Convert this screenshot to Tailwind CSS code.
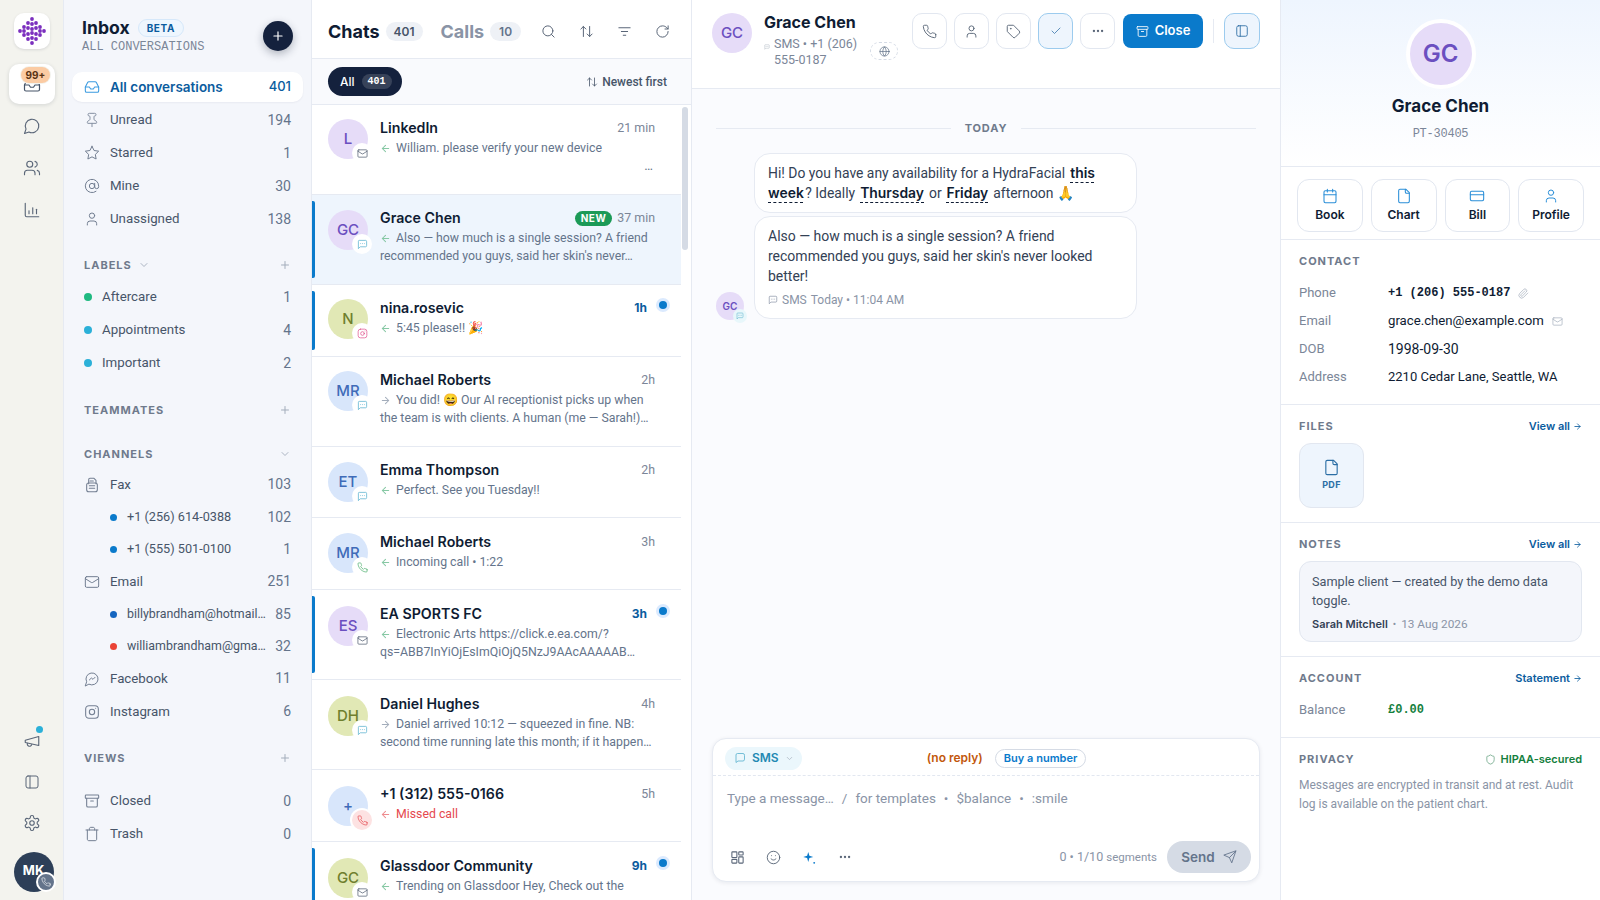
<!DOCTYPE html>
<html lang="en">
<head>
    <meta charset="UTF-8">
    <title>Inbox</title>
    <script src="https://cdn.jsdelivr.net/npm/@tailwindcss/browser@4"></script>
</head>
<body class="h-[900px] w-[1600px] overflow-hidden bg-white font-['Roboto',sans-serif] text-[#0f1c33]">
    <!-- Icon sprite -->
    <svg class="hidden">
        <symbol id="i-inbox" viewBox="0 0 24 24" fill="none" stroke="currentColor" stroke-width="1.6" stroke-linecap="round" stroke-linejoin="round"><polyline points="22 12 16 12 14 15 10 15 8 12 2 12"/><path d="M5.45 5.11 2 12v6a2 2 0 0 0 2 2h16a2 2 0 0 0 2-2v-6l-3.45-6.89A2 2 0 0 0 16.76 4H7.24a2 2 0 0 0-1.79 1.11z"/></symbol>
        <symbol id="i-pin" viewBox="0 0 24 24" fill="none" stroke="currentColor" stroke-width="1.5" stroke-linecap="round" stroke-linejoin="round"><path d="M12 17v5"/><path d="M9 10.76a2 2 0 0 1-1.11 1.79l-1.78.9A2 2 0 0 0 5 15.24V16a1 1 0 0 0 1 1h12a1 1 0 0 0 1-1v-.76a2 2 0 0 0-1.11-1.79l-1.78-.9A2 2 0 0 1 15 10.76V7a1 1 0 0 1 1-1 2 2 0 0 0 0-4H8a2 2 0 0 0 0 4 1 1 0 0 1 1 1z"/></symbol>
        <symbol id="i-star" viewBox="0 0 24 24" fill="none" stroke="currentColor" stroke-width="1.5" stroke-linecap="round" stroke-linejoin="round"><polygon points="12 2 15.09 8.26 22 9.27 17 14.14 18.18 21.02 12 17.77 5.82 21.02 7 14.14 2 9.27 8.91 8.26 12 2"/></symbol>
        <symbol id="i-at" viewBox="0 0 24 24" fill="none" stroke="currentColor" stroke-width="1.5" stroke-linecap="round" stroke-linejoin="round"><circle cx="12" cy="12" r="4"/><path d="M16 8v5a3 3 0 0 0 6 0v-1a10 10 0 1 0-4 8"/></symbol>
        <symbol id="i-user" viewBox="0 0 24 24" fill="none" stroke="currentColor" stroke-width="1.5" stroke-linecap="round" stroke-linejoin="round"><path d="M19 21v-2a4 4 0 0 0-4-4H9a4 4 0 0 0-4 4v2"/><circle cx="12" cy="7" r="4"/></symbol>
        <symbol id="i-chat" viewBox="0 0 24 24" fill="none" stroke="currentColor" stroke-width="1.5" stroke-linecap="round" stroke-linejoin="round"><path d="M7.9 20A9 9 0 1 0 4 16.1L2 22Z"/></symbol>
        <symbol id="i-msg" viewBox="0 0 24 24" fill="none" stroke="currentColor" stroke-width="1.7" stroke-linecap="round" stroke-linejoin="round"><path d="M21 15a3 3 0 0 1-3 3H8l-4 3V6a3 3 0 0 1 3-3h11a3 3 0 0 1 3 3z"/></symbol>
        <symbol id="i-users" viewBox="0 0 24 24" fill="none" stroke="currentColor" stroke-width="1.5" stroke-linecap="round" stroke-linejoin="round"><path d="M16 21v-2a4 4 0 0 0-4-4H6a4 4 0 0 0-4 4v2"/><circle cx="9" cy="7" r="4"/><path d="M22 21v-2a4 4 0 0 0-3-3.87"/><path d="M16 3.13a4 4 0 0 1 0 7.75"/></symbol>
        <symbol id="i-chart" viewBox="0 0 24 24" fill="none" stroke="currentColor" stroke-width="1.5" stroke-linecap="round" stroke-linejoin="round"><path d="M3 3v16a2 2 0 0 0 2 2h16"/><path d="M8 17v-4"/><path d="M13 17V9"/><path d="M18 17v-6"/></symbol>
        <symbol id="i-mega" viewBox="0 0 24 24" fill="none" stroke="currentColor" stroke-width="1.5" stroke-linecap="round" stroke-linejoin="round"><path d="m3 11 18-5v12L3 14v-3z"/><path d="M11.6 16.8a3 3 0 1 1-5.8-1.6"/></symbol>
        <symbol id="i-panel" viewBox="0 0 24 24" fill="none" stroke="currentColor" stroke-width="1.5" stroke-linecap="round" stroke-linejoin="round"><rect x="3" y="3" width="18" height="18" rx="3"/><path d="M9 3v18"/></symbol>
        <symbol id="i-gear" viewBox="0 0 24 24" fill="none" stroke="currentColor" stroke-width="1.5" stroke-linecap="round" stroke-linejoin="round"><path d="M12.22 2h-.44a2 2 0 0 0-2 2v.18a2 2 0 0 1-1 1.73l-.43.25a2 2 0 0 1-2 0l-.15-.08a2 2 0 0 0-2.73.73l-.22.38a2 2 0 0 0 .73 2.73l.15.1a2 2 0 0 1 1 1.72v.51a2 2 0 0 1-1 1.74l-.15.09a2 2 0 0 0-.73 2.73l.22.38a2 2 0 0 0 2.73.73l.15-.08a2 2 0 0 1 2 0l.43.25a2 2 0 0 1 1 1.73V20a2 2 0 0 0 2 2h.44a2 2 0 0 0 2-2v-.18a2 2 0 0 1 1-1.73l.43-.25a2 2 0 0 1 2 0l.15.08a2 2 0 0 0 2.73-.73l.22-.39a2 2 0 0 0-.73-2.73l-.15-.08a2 2 0 0 1-1-1.74v-.5a2 2 0 0 1 1-1.74l.15-.09a2 2 0 0 0 .73-2.73l-.22-.38a2 2 0 0 0-2.73-.73l-.15.08a2 2 0 0 1-2 0l-.43-.25a2 2 0 0 1-1-1.73V4a2 2 0 0 0-2-2z"/><circle cx="12" cy="12" r="3"/></symbol>
        <symbol id="i-fax" viewBox="0 0 24 24" fill="none" stroke="currentColor" stroke-width="1.6" stroke-linecap="round" stroke-linejoin="round"><path d="M7 10V4a2 2 0 0 1 2-2h6l3 3v5"/><rect x="4" y="9" width="16" height="13" rx="3"/><path d="M8 13h8M8 17h8M9 6h5"/></symbol>
        <symbol id="i-mail" viewBox="0 0 24 24" fill="none" stroke="currentColor" stroke-width="1.5" stroke-linecap="round" stroke-linejoin="round"><rect x="2" y="4" width="20" height="16" rx="2"/><path d="m22 7-8.97 5.7a1.94 1.94 0 0 1-2.06 0L2 7"/></symbol>
        <symbol id="i-fb" viewBox="0 0 24 24" fill="none" stroke="currentColor" stroke-width="1.5" stroke-linecap="round" stroke-linejoin="round"><path d="M7.9 20A9 9 0 1 0 4 16.1L2 22Z"/><path d="m8 13.5 3-3 2.5 2 3-3"/></symbol>
        <symbol id="i-ig" viewBox="0 0 24 24" fill="none" stroke="currentColor" stroke-width="1.6" stroke-linecap="round" stroke-linejoin="round"><rect x="2.5" y="2.5" width="19" height="19" rx="5"/><circle cx="12" cy="12" r="4"/><path d="M17.5 6.5h.01"/></symbol>
        <symbol id="i-archive" viewBox="0 0 24 24" fill="none" stroke="currentColor" stroke-width="1.6" stroke-linecap="round" stroke-linejoin="round"><rect x="2" y="3" width="20" height="5" rx="1"/><path d="M4 8v11a2 2 0 0 0 2 2h12a2 2 0 0 0 2-2V8"/><path d="M10 12h4"/></symbol>
        <symbol id="i-trash" viewBox="0 0 24 24" fill="none" stroke="currentColor" stroke-width="1.5" stroke-linecap="round" stroke-linejoin="round"><path d="M3 6h18"/><path d="M19 6v14c0 1-1 2-2 2H7c-1 0-2-1-2-2V6"/><path d="M8 6V4c0-1 1-2 2-2h4c1 0 2 1 2 2v2"/></symbol>
        <symbol id="i-plus" viewBox="0 0 24 24" fill="none" stroke="currentColor" stroke-width="2" stroke-linecap="round"><path d="M12 5v14M5 12h14"/></symbol>
        <symbol id="i-down" viewBox="0 0 24 24" fill="none" stroke="currentColor" stroke-width="1.8" stroke-linecap="round" stroke-linejoin="round"><path d="m6 9 6 6 6-6"/></symbol>
        <symbol id="i-search" viewBox="0 0 24 24" fill="none" stroke="currentColor" stroke-width="1.6" stroke-linecap="round" stroke-linejoin="round"><circle cx="11" cy="11" r="8"/><path d="m21 21-4.3-4.3"/></symbol>
        <symbol id="i-sort" viewBox="0 0 24 24" fill="none" stroke="currentColor" stroke-width="1.6" stroke-linecap="round" stroke-linejoin="round"><path d="m21 16-4 4-4-4"/><path d="M17 20V4"/><path d="m3 8 4-4 4 4"/><path d="M7 4v16"/></symbol>
        <symbol id="i-filter" viewBox="0 0 24 24" fill="none" stroke="currentColor" stroke-width="1.6" stroke-linecap="round"><path d="M3 6h18M7 12h10M10 18h4"/></symbol>
        <symbol id="i-refresh" viewBox="0 0 24 24" fill="none" stroke="currentColor" stroke-width="1.6" stroke-linecap="round" stroke-linejoin="round"><path d="M21 12a9 9 0 1 1-9-9c2.52 0 4.93 1 6.74 2.74L21 8"/><path d="M21 3v5h-5"/></symbol>
        <symbol id="i-phone" viewBox="0 0 24 24" fill="none" stroke="currentColor" stroke-width="1.5" stroke-linecap="round" stroke-linejoin="round"><path d="M22 16.92v3a2 2 0 0 1-2.18 2 19.79 19.79 0 0 1-8.63-3.07 19.5 19.5 0 0 1-6-6 19.79 19.79 0 0 1-3.07-8.67A2 2 0 0 1 4.11 2h3a2 2 0 0 1 2 1.72 12.84 12.84 0 0 0 .7 2.81 2 2 0 0 1-.45 2.11L8.09 9.91a16 16 0 0 0 6 6l1.27-1.27a2 2 0 0 1 2.11-.45 12.84 12.84 0 0 0 2.81.7A2 2 0 0 1 22 16.92z"/></symbol>
        <symbol id="i-tag" viewBox="0 0 24 24" fill="none" stroke="currentColor" stroke-width="1.5" stroke-linecap="round" stroke-linejoin="round"><path d="M12.586 2.586A2 2 0 0 0 11.172 2H4a2 2 0 0 0-2 2v7.172a2 2 0 0 0 .586 1.414l8.704 8.704a2.426 2.426 0 0 0 3.42 0l6.58-6.58a2.426 2.426 0 0 0 0-3.42z"/><circle cx="7.5" cy="7.5" r=".5"/></symbol>
        <symbol id="i-check" viewBox="0 0 24 24" fill="none" stroke="currentColor" stroke-width="1.5" stroke-linecap="round" stroke-linejoin="round"><path d="M20 6 9 17l-5-5"/></symbol>
        <symbol id="i-dots" viewBox="0 0 24 24" fill="currentColor"><circle cx="5" cy="12" r="2"/><circle cx="12" cy="12" r="2"/><circle cx="19" cy="12" r="2"/></symbol>
        <symbol id="i-globe" viewBox="0 0 24 24" fill="none" stroke="currentColor" stroke-width="1.6" stroke-linecap="round" stroke-linejoin="round"><circle cx="12" cy="12" r="10"/><path d="M12 2a14.5 14.5 0 0 0 0 20 14.5 14.5 0 0 0 0-20"/><path d="M2 12h20"/></symbol>
        <symbol id="i-file" viewBox="0 0 24 24" fill="none" stroke="currentColor" stroke-width="1.6" stroke-linecap="round" stroke-linejoin="round"><path d="M15 2H6a2 2 0 0 0-2 2v16a2 2 0 0 0 2 2h12a2 2 0 0 0 2-2V7Z"/><path d="M14 2v4a2 2 0 0 0 2 2h4"/></symbol>
        <symbol id="i-cal" viewBox="0 0 24 24" fill="none" stroke="currentColor" stroke-width="1.6" stroke-linecap="round" stroke-linejoin="round"><rect x="3" y="4" width="18" height="18" rx="2"/><path d="M16 2v4M8 2v4M3 10h18"/></symbol>
        <symbol id="i-card" viewBox="0 0 24 24" fill="none" stroke="currentColor" stroke-width="1.6" stroke-linecap="round" stroke-linejoin="round"><rect x="2" y="5" width="20" height="14" rx="2"/><path d="M2 10h20"/></symbol>
        <symbol id="i-shield" viewBox="0 0 24 24" fill="none" stroke="currentColor" stroke-width="1.6" stroke-linecap="round" stroke-linejoin="round"><path d="M20 13c0 5-3.5 7.5-7.66 8.95a1 1 0 0 1-.67-.01C7.5 20.5 4 18 4 13V6a1 1 0 0 1 1-1c2 0 4.5-1.2 6.24-2.72a1.17 1.17 0 0 1 1.52 0C14.51 3.81 17 5 19 5a1 1 0 0 1 1 1z"/></symbol>
        <symbol id="i-send" viewBox="0 0 24 24" fill="none" stroke="currentColor" stroke-width="1.5" stroke-linecap="round" stroke-linejoin="round"><path d="m22 2-7 20-4-9-9-4Z"/><path d="M22 2 11 13"/></symbol>
        <symbol id="i-smile" viewBox="0 0 24 24" fill="none" stroke="currentColor" stroke-width="1.5" stroke-linecap="round" stroke-linejoin="round"><circle cx="12" cy="12" r="10"/><path d="M8 14s1.5 2 4 2 4-2 4-2"/><path d="M9 9h.01M15 9h.01"/></symbol>
        <symbol id="i-grid" viewBox="0 0 24 24" fill="none" stroke="currentColor" stroke-width="1.7" stroke-linejoin="round"><rect x="3" y="3" width="8" height="9" rx="1"/><rect x="14" y="3" width="7" height="5" rx="1"/><rect x="14" y="11" width="7" height="10" rx="1"/><rect x="3" y="15" width="8" height="6" rx="1"/></symbol>
        <symbol id="i-clip" viewBox="0 0 24 24" fill="none" stroke="currentColor" stroke-width="1.5" stroke-linecap="round" stroke-linejoin="round"><path d="m21.44 11.05-9.19 9.19a6 6 0 0 1-8.49-8.49l8.57-8.57A4 4 0 1 1 18 8.84l-8.59 8.57a2 2 0 0 1-2.83-2.83l8.49-8.48"/></symbol>
        <symbol id="i-sms" viewBox="0 0 24 24" fill="none" stroke="currentColor" stroke-width="1.7" stroke-linecap="round" stroke-linejoin="round"><path d="M21 15a2 2 0 0 1-2 2H7l-4 4V5a2 2 0 0 1 2-2h14a2 2 0 0 1 2 2z"/><path d="M8 10h.01M12 10h.01M16 10h.01"/></symbol>
        <symbol id="i-left" viewBox="0 0 24 24" fill="none" stroke="currentColor" stroke-width="2.2" stroke-linecap="round" stroke-linejoin="round"><path d="M19 12H5M12 19l-7-7 7-7"/></symbol>
        <symbol id="i-right" viewBox="0 0 24 24" fill="none" stroke="currentColor" stroke-width="2.2" stroke-linecap="round" stroke-linejoin="round"><path d="M5 12h14M12 5l7 7-7 7"/></symbol>
        <symbol id="i-spark" viewBox="0 0 24 24" fill="currentColor"><path d="M10 3l1.8 6.2L18 11l-6.2 1.8L10 19l-1.8-6.2L2 11l6.2-1.8z"/><circle cx="19.5" cy="20.5" r="1.5"/></symbol>
    </svg>

    <div class="flex h-full">
        <!-- Rail -->
        <nav class="flex w-[64px] shrink-0 flex-col items-center border-r border-[#e6eaf2] bg-[#f3f3ee]">
            <div class="mt-[13px] flex h-[36px] w-[36px] items-center justify-center rounded-[10px] bg-white shadow-[0_1px_3px_rgba(15,28,51,0.12)]">
                <svg width="30" height="30" viewBox="0 0 30 30" fill="#7b2fbe">
                    <circle cx="3" cy="15" r="1.9"/>
                    <circle cx="7" cy="11" r="1.9"/><circle cx="7" cy="15" r="1.9"/><circle cx="7" cy="19" r="1.9"/>
                    <circle cx="11" cy="7" r="1.9"/><circle cx="11" cy="12" r="1.9"/><circle cx="11" cy="18" r="1.9"/><circle cx="11" cy="23" r="1.9"/>
                    <circle cx="15" cy="3" r="1.9"/><circle cx="15" cy="8" r="1.9"/><circle cx="15" cy="13" r="1.9"/><circle cx="15" cy="17" r="1.9"/><circle cx="15" cy="22" r="1.9"/><circle cx="15" cy="27" r="1.9"/>
                    <circle cx="19" cy="7" r="1.9"/><circle cx="19" cy="12" r="1.9"/><circle cx="19" cy="18" r="1.9"/><circle cx="19" cy="23" r="1.9"/>
                    <circle cx="23" cy="11" r="1.9"/><circle cx="23" cy="15" r="1.9"/><circle cx="23" cy="19" r="1.9"/>
                    <circle cx="27" cy="15" r="1.9"/>
                </svg>
            </div>
            <div class="relative mt-[15px] flex h-[40px] w-[46px] items-center justify-center rounded-[10px] bg-white shadow-[0_1px_4px_rgba(15,28,51,0.14)]">
                <svg class="mt-[2px] h-[18px] w-[18px] text-[#475569]"><use href="#i-inbox"/></svg>
                <span class="absolute left-[12px] top-[3px] rounded-full bg-[#fbcba3] px-[5px] font-['Inter'] text-[10px] font-bold leading-[16px] text-[#5b3415] ring-1 ring-[#f3f3ee]">99+</span>
            </div>
            <svg class="mt-[13px] h-[18px] w-[18px] text-[#5a6678]"><use href="#i-chat"/></svg>
            <svg class="mt-[24px] h-[18px] w-[18px] text-[#5a6678]"><use href="#i-users"/></svg>
            <svg class="mt-[24px] h-[18px] w-[18px] text-[#5a6678]"><use href="#i-chart"/></svg>
            <div class="relative mt-auto">
                <svg class="h-[18px] w-[18px] text-[#5a6678]"><use href="#i-mega"/></svg>
                <span class="absolute left-[13px] top-[-6px] h-[7px] w-[7px] rounded-full bg-[#2bb0d8]"></span>
            </div>
            <svg class="mt-[24px] h-[16px] w-[16px] text-[#5a6678]"><use href="#i-panel"/></svg>
            <svg class="mt-[24px] h-[18px] w-[18px] text-[#5a6678]"><use href="#i-gear"/></svg>
            <div class="relative mb-[8px] ml-[4px] mt-[20px] flex h-[40px] w-[40px] items-start justify-center rounded-full bg-[#2d3f58] pt-[9px] font-['Inter'] text-[13px] font-bold text-white">
                MK
                <span class="absolute bottom-[0px] right-[-2px] flex h-[20px] w-[20px] items-center justify-center rounded-full border-2 border-white bg-[#64748b] text-white"><svg class="h-[10px] w-[10px]"><use href="#i-phone"/></svg></span>
            </div>
        </nav>

        <!-- Sidebar -->
        <aside class="flex w-[248px] shrink-0 flex-col border-r border-[#e6eaf2] bg-[#f4f6fb] px-2 text-[13.3px] text-[#475569]">
            <div class="flex h-[72px] shrink-0 items-start justify-between pl-[10px] pr-[10px]">
                <div class="pt-[18px]">
                    <div class="flex h-[20px] items-center gap-[8px]">
                        <span class="font-['Inter'] text-[17.6px] font-bold text-[#0f1c33]">Inbox</span>
                        <span class="rounded-full border border-[#d6e8fa] bg-[#eef6fe] px-[8px] font-['Inter'] text-[10px] font-bold leading-[16px] tracking-[0.06em] text-[#0b5c9e]">BETA</span>
                    </div>
                    <div class="mt-[2px] font-['Liberation_Mono',monospace] text-[12px] leading-[14px] text-[#7b8698]">ALL CONVERSATIONS</div>
                </div>
                <div class="mt-[21px] flex h-[30px] w-[30px] items-center justify-center rounded-full bg-[#14213d] text-white shadow-[0_3px_8px_rgba(15,28,51,0.3)]">
                    <svg class="h-[14px] w-[14px]"><use href="#i-plus"/></svg>
                </div>
            </div>

            <div class="flex flex-col gap-[3px]">
                <div class="flex h-[30px] items-center rounded-[10px] bg-white pl-3 pr-3 font-['Inter'] text-[13.5px] font-semibold text-[#0b5c9e] shadow-[0_1px_2px_rgba(15,28,51,0.05)]">
                    <svg class="mr-[10px] h-[16px] w-[16px] text-[#3b9be0]"><use href="#i-inbox"/></svg>All conversations<span class="ml-auto text-[13px] font-medium">401</span>
                </div>
                <div class="flex h-[30px] items-center pl-3 pr-3"><svg class="mr-[10px] h-[16px] w-[16px] text-[#8590a2]"><use href="#i-pin"/></svg>Unread<span class="ml-auto text-[14px] text-[#64748b]">194</span></div>
                <div class="flex h-[30px] items-center pl-3 pr-3"><svg class="mr-[10px] h-[16px] w-[16px] text-[#737f92]"><use href="#i-star"/></svg>Starred<span class="ml-auto text-[14px] text-[#64748b]">1</span></div>
                <div class="flex h-[30px] items-center pl-3 pr-3"><svg class="mr-[10px] h-[16px] w-[16px] text-[#737f92]"><use href="#i-at"/></svg>Mine<span class="ml-auto text-[14px] text-[#64748b]">30</span></div>
                <div class="flex h-[30px] items-center pl-3 pr-3"><svg class="mr-[10px] h-[16px] w-[16px] text-[#737f92]"><use href="#i-user"/></svg>Unassigned<span class="ml-auto text-[14px] text-[#64748b]">138</span></div>
            </div>

            <div class="mt-[21px] flex h-[20px] items-center pl-3 pr-[12px] font-['Inter'] text-[11px] font-bold tracking-[0.09em] text-[#6f7a8c]">LABELS<svg class="ml-[6px] h-[12px] w-[12px] text-[#a3adbb]"><use href="#i-down"/></svg><svg class="ml-auto h-[12px] w-[12px] text-[#a3adbb]"><use href="#i-plus"/></svg></div>
            <div class="mt-[7px] flex flex-col gap-[3px]">
                <div class="flex h-[30px] items-center pl-3 pr-3"><span class="mr-[10px] h-[8px] w-[8px] rounded-full bg-[#1fb981]"></span>Aftercare<span class="ml-auto text-[14px] text-[#64748b]">1</span></div>
                <div class="flex h-[30px] items-center pl-3 pr-3"><span class="mr-[10px] h-[8px] w-[8px] rounded-full bg-[#2bb0d8]"></span>Appointments<span class="ml-auto text-[14px] text-[#64748b]">4</span></div>
                <div class="flex h-[30px] items-center pl-3 pr-3"><span class="mr-[10px] h-[8px] w-[8px] rounded-full bg-[#2bb0d8]"></span>Important<span class="ml-auto text-[14px] text-[#64748b]">2</span></div>
            </div>

            <div class="mt-[22px] flex h-[20px] items-center pl-3 pr-[12px] font-['Inter'] text-[11px] font-bold tracking-[0.09em] text-[#6f7a8c]">TEAMMATES<svg class="ml-auto h-[12px] w-[12px] text-[#a3adbb]"><use href="#i-plus"/></svg></div>

            <div class="mt-[24px] flex h-[20px] items-center pl-3 pr-[12px] font-['Inter'] text-[11px] font-bold tracking-[0.09em] text-[#6f7a8c]">CHANNELS<svg class="ml-auto h-[12px] w-[12px] text-[#a3adbb]"><use href="#i-down"/></svg></div>
            <div class="mt-[4px] flex flex-col">
                <div class="flex h-[33px] items-center pl-3 pr-3"><svg class="mr-[10px] h-[16px] w-[16px] text-[#737f92]"><use href="#i-fax"/></svg>Fax<span class="ml-auto text-[14px] text-[#64748b]">103</span></div>
                <div class="flex h-[32px] items-center pl-[38px] pr-3 text-[12.7px]"><span class="mr-[10px] h-[7px] w-[7px] rounded-full bg-[#0a7acb]"></span>+1 (256) 614-0388<span class="ml-auto text-[14px] text-[#64748b]">102</span></div>
                <div class="flex h-[32px] items-center pl-[38px] pr-3 text-[12.7px]"><span class="mr-[10px] h-[7px] w-[7px] rounded-full bg-[#0a7acb]"></span>+1 (555) 501-0100<span class="ml-auto text-[14px] text-[#64748b]">1</span></div>
                <div class="flex h-[33px] items-center pl-3 pr-3"><svg class="mr-[10px] h-[16px] w-[16px] text-[#737f92]"><use href="#i-mail"/></svg>Email<span class="ml-auto text-[14px] text-[#64748b]">251</span></div>
                <div class="flex h-[32px] items-center pl-[38px] pr-3 text-[12.4px]"><span class="mr-[10px] h-[7px] w-[7px] rounded-full bg-[#1566c0]"></span>billybrandham@hotmail…<span class="ml-auto text-[14px] text-[#64748b]">85</span></div>
                <div class="flex h-[32px] items-center pl-[38px] pr-3 text-[12.4px]"><span class="mr-[10px] h-[7px] w-[7px] rounded-full bg-[#ea4335]"></span>williambrandham@gma…<span class="ml-auto text-[14px] text-[#64748b]">32</span></div>
                <div class="flex h-[33px] items-center pl-3 pr-3"><svg class="mr-[10px] h-[16px] w-[16px] text-[#737f92]"><use href="#i-fb"/></svg>Facebook<span class="ml-auto text-[14px] text-[#64748b]">11</span></div>
                <div class="flex h-[33px] items-center pl-3 pr-3"><svg class="mr-[10px] h-[16px] w-[16px] text-[#737f92]"><use href="#i-ig"/></svg>Instagram<span class="ml-auto text-[14px] text-[#64748b]">6</span></div>
            </div>

            <div class="mt-[20px] flex h-[20px] items-center pl-3 pr-[12px] font-['Inter'] text-[11px] font-bold tracking-[0.09em] text-[#6f7a8c]">VIEWS<svg class="ml-auto h-[12px] w-[12px] text-[#a3adbb]"><use href="#i-plus"/></svg></div>
            <div class="mt-[18px] flex flex-col gap-[3px]">
                <div class="flex h-[30px] items-center pl-3 pr-3"><svg class="mr-[10px] h-[16px] w-[16px] text-[#737f92]"><use href="#i-archive"/></svg>Closed<span class="ml-auto text-[14px] text-[#64748b]">0</span></div>
                <div class="flex h-[30px] items-center pl-3 pr-3"><svg class="mr-[10px] h-[16px] w-[16px] text-[#737f92]"><use href="#i-trash"/></svg>Trash<span class="ml-auto text-[14px] text-[#64748b]">0</span></div>
            </div>
        </aside>

        <!-- Chat list -->
        <section class="flex w-[380px] shrink-0 flex-col border-r border-[#e6eaf2] bg-white">
            <div class="flex h-[59px] shrink-0 items-center border-b border-[#e6eaf2] pl-[16px] pt-[4px] font-['Inter']">
                <span class="text-[18px] font-bold">Chats</span>
                <span class="ml-[6px] rounded-full bg-[#eef1f6] px-[8px] text-[12px] font-semibold leading-[19px] text-[#475569]">401</span>
                <span class="ml-[18px] text-[18px] font-bold text-[#8a94a6]">Calls</span>
                <span class="ml-[6px] rounded-full bg-[#eef1f6] px-[9px] text-[12px] font-semibold leading-[19px] text-[#64748b]">10</span>
                <svg class="ml-[20px] h-[15px] w-[15px] text-[#5a6678]"><use href="#i-search"/></svg>
                <svg class="ml-[23px] h-[15px] w-[15px] text-[#5a6678]"><use href="#i-sort"/></svg>
                <svg class="ml-[23px] h-[15px] w-[15px] text-[#5a6678]"><use href="#i-filter"/></svg>
                <svg class="ml-[23px] h-[15px] w-[15px] text-[#5a6678]"><use href="#i-refresh"/></svg>
            </div>
            <div class="flex h-[46px] shrink-0 items-center border-b border-[#e6eaf2] bg-[#f9fafd] pl-[16px] pr-[24px]">
                <span class="flex h-[29px] items-center rounded-full bg-[#14213d] pl-[12px] pr-[10px] font-['Inter'] text-[12px] font-medium text-white">All<span class="ml-[7px] rounded-full bg-white/15 px-[6px] font-['Liberation_Mono',monospace] text-[10px] font-bold leading-[15px]">401</span></span>
                <span class="ml-auto flex items-center gap-[4px] pt-[1px] text-[12px] font-medium text-[#475569]"><svg class="h-[12px] w-[12px]"><use href="#i-sort"/></svg>Newest first</span>
            </div>
            <div class="relative flex-1 overflow-hidden pr-[10px]">
                <div class="absolute right-[3px] top-[2px] h-[143px] w-[6px] rounded-full bg-[#d5dbe5]"></div>

                <div class="flex h-[90px] gap-[12px] border-b border-[#e6eaf2] pl-[16px] pr-[26px] pt-[14px]">
                    <div class="relative flex h-[40px] w-[40px] shrink-0 items-center justify-center rounded-full bg-[#e6dcf8] font-['Inter'] text-[15px] font-medium text-[#6b4fc0]">L<span class="absolute bottom-[-4px] right-[-4px] flex h-[20px] w-[20px] items-center justify-center rounded-full bg-white text-[#475569]"><svg class="h-[11px] w-[11px]"><use href="#i-mail"/></svg></span></div>
                    <div class="mt-[-1px] min-w-0 flex-1">
                        <div class="flex h-[20px] items-center"><span class="font-['Inter'] text-[14.2px] font-semibold">LinkedIn</span><span class="ml-auto text-[12.4px] text-[#7b8698]">21 min</span></div>
                        <div class="mt-[1px] whitespace-nowrap text-[12.3px] leading-[18px] text-[#64748b]"><svg class="mr-[5px] inline h-[11px] w-[11px] text-[#86c8a4]"><use href="#i-left"/></svg>William. please verify your new device</div>
                        <div class="pr-[2px] text-right text-[13px] leading-[18px] text-[#64748b]">…</div>
                    </div>
                </div>

                <div class="relative flex h-[90px] gap-[12px] border-b border-[#e6eaf2] bg-[#eef5fd] pl-[16px] pr-[26px] pt-[14px]">
                    <span class="absolute bottom-[6px] left-0 top-[6px] w-[3px] rounded-r-[2px] bg-[#0a7acb]"></span>
                    <div class="relative mt-[1px] flex h-[40px] w-[40px] shrink-0 items-center justify-center rounded-full bg-[#e6dcf8] font-['Inter'] text-[15px] font-medium text-[#6b4fc0]">GC<span class="absolute bottom-[-4px] right-[-4px] flex h-[20px] w-[20px] items-center justify-center rounded-full bg-white text-[#5fb4d0]"><svg class="h-[11px] w-[11px]"><use href="#i-sms"/></svg></span></div>
                    <div class="mt-[-1px] min-w-0 flex-1">
                        <div class="flex h-[20px] items-center"><span class="font-['Inter'] text-[14.2px] font-semibold">Grace Chen</span><span class="ml-auto rounded-full bg-[#1c9a57] px-[6px] font-['Inter'] text-[10px] font-bold leading-[15px] tracking-[0.05em] text-white">NEW</span><span class="ml-[5px] text-[12.4px] text-[#7b8698]">37 min</span></div>
                        <div class="mt-[1px] whitespace-nowrap text-[12.3px] leading-[18px] text-[#64748b]"><svg class="mr-[5px] inline h-[11px] w-[11px] text-[#86c8a4]"><use href="#i-left"/></svg>Also — how much is a single session? A friend<br>recommended you guys, said her skin's never…</div>
                    </div>
                </div>

                <div class="relative flex h-[72px] gap-[12px] border-b border-[#e6eaf2] pl-[16px] pr-[34px] pt-[14px]">
                    <span class="absolute bottom-[6px] left-0 top-[6px] w-[3px] rounded-r-[2px] bg-[#0a7acb]"></span>
                    <span class="absolute right-[14px] top-[16px] h-[8px] w-[8px] rounded-full bg-[#0a7acb] ring-[3px] ring-[#dbeafe]"></span>
                    <div class="relative flex h-[40px] w-[40px] shrink-0 items-center justify-center rounded-full bg-[#e1e8b5] font-['Inter'] text-[15px] font-medium text-[#6f7f2e]">N<span class="absolute bottom-[-4px] right-[-4px] flex h-[20px] w-[20px] items-center justify-center rounded-full bg-white text-[#e1558f]"><svg class="h-[11px] w-[11px]"><use href="#i-ig"/></svg></span></div>
                    <div class="mt-[-1px] min-w-0 flex-1">
                        <div class="flex h-[20px] items-center"><span class="font-['Inter'] text-[14.2px] font-semibold">nina.rosevic</span><span class="ml-auto font-['Inter'] text-[12px] font-bold text-[#0b5c9e]">1h</span></div>
                        <div class="mt-[1px] whitespace-nowrap text-[12.3px] leading-[18px] text-[#64748b]"><svg class="mr-[5px] inline h-[11px] w-[11px] text-[#86c8a4]"><use href="#i-left"/></svg>5:45 please!! 🎉</div>
                    </div>
                </div>

                <div class="flex h-[90px] gap-[12px] border-b border-[#e6eaf2] pl-[16px] pr-[26px] pt-[14px]">
                    <div class="relative flex h-[40px] w-[40px] shrink-0 items-center justify-center rounded-full bg-[#d8e6fb] font-['Inter'] text-[15px] font-medium text-[#3f6bb8]">MR<span class="absolute bottom-[-4px] right-[-4px] flex h-[20px] w-[20px] items-center justify-center rounded-full bg-white text-[#5fb4d0]"><svg class="h-[11px] w-[11px]"><use href="#i-sms"/></svg></span></div>
                    <div class="mt-[-1px] min-w-0 flex-1">
                        <div class="flex h-[20px] items-center"><span class="font-['Inter'] text-[14.2px] font-semibold">Michael Roberts</span><span class="ml-auto text-[12.4px] text-[#7b8698]">2h</span></div>
                        <div class="mt-[1px] whitespace-nowrap text-[12.3px] leading-[18px] text-[#64748b]"><svg class="mr-[5px] inline h-[11px] w-[11px] text-[#a3adbb]"><use href="#i-right"/></svg>You did! 😄 Our AI receptionist picks up when<br>the team is with clients. A human (me — Sarah!)…</div>
                    </div>
                </div>

                <div class="flex h-[71px] gap-[12px] border-b border-[#e6eaf2] pl-[16px] pr-[26px] pt-[14px]">
                    <div class="relative mt-[1px] flex h-[40px] w-[40px] shrink-0 items-center justify-center rounded-full bg-[#d8e6fb] font-['Inter'] text-[15px] font-medium text-[#3f6bb8]">ET<span class="absolute bottom-[-4px] right-[-4px] flex h-[20px] w-[20px] items-center justify-center rounded-full bg-white text-[#5fb4d0]"><svg class="h-[11px] w-[11px]"><use href="#i-sms"/></svg></span></div>
                    <div class="mt-[-1px] min-w-0 flex-1">
                        <div class="flex h-[20px] items-center"><span class="font-['Inter'] text-[14.2px] font-semibold">Emma Thompson</span><span class="ml-auto text-[12.4px] text-[#7b8698]">2h</span></div>
                        <div class="mt-[1px] whitespace-nowrap text-[12.3px] leading-[18px] text-[#64748b]"><svg class="mr-[5px] inline h-[11px] w-[11px] text-[#86c8a4]"><use href="#i-left"/></svg>Perfect. See you Tuesday!!</div>
                    </div>
                </div>

                <div class="flex h-[72px] gap-[12px] border-b border-[#e6eaf2] pl-[16px] pr-[26px] pt-[14px]">
                    <div class="relative mt-[1px] flex h-[40px] w-[40px] shrink-0 items-center justify-center rounded-full bg-[#d8e6fb] font-['Inter'] text-[15px] font-medium text-[#3f6bb8]">MR<span class="absolute bottom-[-4px] right-[-4px] flex h-[20px] w-[20px] items-center justify-center rounded-full bg-white text-[#4caf6e]"><svg class="h-[11px] w-[11px]"><use href="#i-phone"/></svg></span></div>
                    <div class="min-w-0 flex-1">
                        <div class="flex h-[20px] items-center"><span class="font-['Inter'] text-[14.2px] font-semibold">Michael Roberts</span><span class="ml-auto text-[12.4px] text-[#7b8698]">3h</span></div>
                        <div class="mt-[1px] whitespace-nowrap text-[12.3px] leading-[18px] text-[#64748b]"><svg class="mr-[5px] inline h-[11px] w-[11px] text-[#86c8a4]"><use href="#i-left"/></svg>Incoming call • 1:22</div>
                    </div>
                </div>

                <div class="relative flex h-[90px] gap-[12px] border-b border-[#e6eaf2] pl-[16px] pr-[34px] pt-[14px]">
                    <span class="absolute bottom-[6px] left-0 top-[6px] w-[3px] rounded-r-[2px] bg-[#0a7acb]"></span>
                    <span class="absolute right-[14px] top-[17px] h-[8px] w-[8px] rounded-full bg-[#0a7acb] ring-[3px] ring-[#dbeafe]"></span>
                    <div class="relative mt-[2px] flex h-[40px] w-[40px] shrink-0 items-center justify-center rounded-full bg-[#e6dcf8] font-['Inter'] text-[15px] font-medium text-[#6b4fc0]">ES<span class="absolute bottom-[-4px] right-[-4px] flex h-[20px] w-[20px] items-center justify-center rounded-full bg-white text-[#475569]"><svg class="h-[11px] w-[11px]"><use href="#i-mail"/></svg></span></div>
                    <div class="min-w-0 flex-1">
                        <div class="flex h-[20px] items-center"><span class="font-['Inter'] text-[14.2px] font-semibold">EA SPORTS FC</span><span class="ml-auto font-['Inter'] text-[12px] font-bold text-[#0b5c9e]">3h</span></div>
                        <div class="mt-[1px] whitespace-nowrap text-[12.3px] leading-[18px] text-[#64748b]"><svg class="mr-[5px] inline h-[11px] w-[11px] text-[#86c8a4]"><use href="#i-left"/></svg>Electronic Arts https://click.e.ea.com/?<br>qs=ABB7InYiOjEsImQiOjQ5NzJ9AAcAAAAAB…</div>
                    </div>
                </div>

                <div class="flex h-[90px] gap-[12px] border-b border-[#e6eaf2] pl-[16px] pr-[26px] pt-[14px]">
                    <div class="relative mt-[2px] flex h-[40px] w-[40px] shrink-0 items-center justify-center rounded-full bg-[#e1e8b5] font-['Inter'] text-[15px] font-medium text-[#6f7f2e]">DH<span class="absolute bottom-[-4px] right-[-4px] flex h-[20px] w-[20px] items-center justify-center rounded-full bg-white text-[#5fb4d0]"><svg class="h-[11px] w-[11px]"><use href="#i-sms"/></svg></span></div>
                    <div class="min-w-0 flex-1">
                        <div class="flex h-[20px] items-center"><span class="font-['Inter'] text-[14.2px] font-semibold">Daniel Hughes</span><span class="ml-auto text-[12.4px] text-[#7b8698]">4h</span></div>
                        <div class="mt-[1px] whitespace-nowrap text-[12.3px] leading-[18px] text-[#64748b]"><svg class="mr-[5px] inline h-[11px] w-[11px] text-[#a3adbb]"><use href="#i-right"/></svg>Daniel arrived 10:12 — squeezed in fine. NB:<br>second time running late this month; if it happen…</div>
                    </div>
                </div>

                <div class="flex h-[72px] gap-[12px] border-b border-[#e6eaf2] pl-[16px] pr-[26px] pt-[14px]">
                    <div class="relative mt-[2px] flex h-[40px] w-[40px] shrink-0 items-center justify-center rounded-full bg-[#d8e6fb] font-['Inter'] text-[15px] font-medium text-[#3f6bb8]">+<span class="absolute bottom-[-4px] right-[-4px] flex h-[20px] w-[20px] items-center justify-center rounded-full bg-[#fde2e2] text-[#e5484d] ring-2 ring-white"><svg class="h-[11px] w-[11px]"><use href="#i-phone"/></svg></span></div>
                    <div class="min-w-0 flex-1">
                        <div class="flex h-[20px] items-center"><span class="font-['Inter'] text-[14.2px] font-semibold">+1 (312) 555-0166</span><span class="ml-auto text-[12.4px] text-[#7b8698]">5h</span></div>
                        <div class="mt-[1px] whitespace-nowrap text-[12.3px] leading-[18px] text-[#e5484d]"><svg class="mr-[5px] inline h-[11px] w-[11px] text-[#ee8b8e]"><use href="#i-left"/></svg>Missed call</div>
                    </div>
                </div>

                <div class="relative flex h-[90px] gap-[12px] pl-[16px] pr-[34px] pt-[14px]">
                    <span class="absolute bottom-[6px] left-0 top-[6px] w-[3px] rounded-r-[2px] bg-[#0a7acb]"></span>
                    <span class="absolute right-[14px] top-[17px] h-[8px] w-[8px] rounded-full bg-[#0a7acb] ring-[3px] ring-[#dbeafe]"></span>
                    <div class="relative mt-[2px] flex h-[40px] w-[40px] shrink-0 items-center justify-center rounded-full bg-[#e1e8b5] font-['Inter'] text-[15px] font-medium text-[#6f7f2e]">GC<span class="absolute bottom-[-4px] right-[-4px] flex h-[20px] w-[20px] items-center justify-center rounded-full bg-white text-[#475569]"><svg class="h-[11px] w-[11px]"><use href="#i-mail"/></svg></span></div>
                    <div class="min-w-0 flex-1">
                        <div class="flex h-[20px] items-center"><span class="font-['Inter'] text-[14.2px] font-semibold">Glassdoor Community</span><span class="ml-auto font-['Inter'] text-[12px] font-bold text-[#0b5c9e]">9h</span></div>
                        <div class="mt-[1px] whitespace-nowrap text-[12.3px] leading-[18px] text-[#64748b]"><svg class="mr-[5px] inline h-[11px] w-[11px] text-[#86c8a4]"><use href="#i-left"/></svg>Trending on Glassdoor Hey, Check out the</div>
                    </div>
                </div>
            </div>
        </section>

        <!-- Conversation -->
        <main class="flex w-[589px] shrink-0 flex-col border-r border-[#e6eaf2] bg-[#fafbfe]">
            <div class="flex h-[89px] shrink-0 items-start border-b border-[#e6eaf2] bg-white pl-[20px] pr-[20px] pt-[13px]">
                <div class="flex h-[40px] w-[40px] shrink-0 items-center justify-center rounded-full bg-[#e6dcf8] font-['Inter'] text-[15px] font-medium text-[#6b4fc0]">GC</div>
                <div class="ml-[12px] mt-[-1px] w-[106px] shrink-0">
                    <div class="whitespace-nowrap font-['Inter'] text-[16px] font-bold leading-[20px]">Grace Chen</div>
                    <div class="relative mt-[4px] text-[12.5px] leading-[16px] text-[#7b8698]">
                        <svg class="absolute left-0 top-[8px] h-[6px] w-[6px] text-[#a3adbb]"><use href="#i-sms"/></svg>
                        <div class="pl-[10px]">SMS • +1 (206)<br>555-0187</div>
                    </div>
                </div>
                <div class="mt-[29px] flex h-[18px] w-[28px] shrink-0 items-center justify-center rounded-full border border-dashed border-[#d5dbe5] text-[#64748b]"><svg class="h-[11px] w-[11px]"><use href="#i-globe"/></svg></div>
                <div class="ml-auto flex items-center gap-[7px]">
                    <div class="flex h-[36px] w-[35px] items-center justify-center rounded-[10px] border border-[#e2e7f0] text-[#5a6678]"><svg class="h-[15px] w-[15px]"><use href="#i-phone"/></svg></div>
                    <div class="flex h-[36px] w-[35px] items-center justify-center rounded-[10px] border border-[#e2e7f0] text-[#5a6678]"><svg class="h-[15px] w-[15px]"><use href="#i-user"/></svg></div>
                    <div class="flex h-[36px] w-[35px] items-center justify-center rounded-[10px] border border-[#e2e7f0] text-[#5a6678]"><svg class="h-[15px] w-[15px]"><use href="#i-tag"/></svg></div>
                    <div class="flex h-[36px] w-[35px] items-center justify-center rounded-[10px] border border-[#9ccbee] bg-[#eef5fd] text-[#2f6ea5]"><svg class="h-[12px] w-[12px]"><use href="#i-check"/></svg></div>
                    <div class="flex h-[36px] w-[35px] items-center justify-center rounded-[10px] border border-[#e2e7f0] text-[#5a6678]"><svg class="h-[14px] w-[14px]"><use href="#i-dots"/></svg></div>
                    <div class="ml-[1px] flex h-[34px] w-[80px] items-center justify-center gap-[6px] rounded-[8px] bg-[#0a7acb] font-['Inter'] text-[13px] font-semibold text-white"><svg class="h-[13px] w-[13px]"><use href="#i-archive"/></svg>Close</div>
                    <div class="ml-[3px] mr-[3px] h-[24px] w-px bg-[#e6eaf2]"></div>
                    <div class="flex h-[36px] w-[36px] items-center justify-center rounded-[10px] border border-[#9ccbee] bg-[#eef5fd] text-[#2f6ea5]"><svg class="h-[14px] w-[14px]"><use href="#i-panel"/></svg></div>
                </div>
            </div>

            <div class="flex flex-1 flex-col px-[24px] pt-[29px]">
                <div class="flex items-center gap-[14px] font-['Inter'] text-[11px] font-bold leading-[20px] tracking-[0.08em] text-[#6f7a8c]"><span class="h-px flex-1 bg-[#e6eaf2]"></span>TODAY<span class="h-px flex-1 bg-[#e6eaf2]"></span></div>
                <div class="mt-[15px] pl-[38px]">
                    <div class="w-[383px] rounded-[16px] border border-[#e6eaf2] bg-white px-[13px] py-[9px] text-[13.9px] leading-[20px] text-[#334155]">Hi! Do you have any availability for a HydraFacial <b class="mx-[1.5px] font-['Inter'] font-semibold text-[#0f1c33] underline decoration-dashed decoration-1 underline-offset-[4px]">this week</b>? Ideally <b class="mx-[1.5px] font-['Inter'] font-semibold text-[#0f1c33] underline decoration-dashed decoration-1 underline-offset-[4px]">Thursday</b> or <b class="mx-[1.5px] font-['Inter'] font-semibold text-[#0f1c33] underline decoration-dashed decoration-1 underline-offset-[4px]">Friday</b> afternoon 🙏</div>
                </div>
                <div class="relative mt-[3px] pl-[38px]">
                    <div class="absolute bottom-[-1px] left-0 flex h-[28px] w-[28px] items-center justify-center rounded-full bg-[#e6dcf8] font-['Inter'] text-[10px] font-semibold text-[#6b4fc0]">GC<span class="absolute bottom-[-3px] right-[-3px] flex h-[14px] w-[14px] items-center justify-center rounded-full bg-[#e8f7fb] text-[#5fb4d0]"><svg class="h-[8px] w-[8px]"><use href="#i-sms"/></svg></span></div>
                    <div class="w-[383px] rounded-[16px] border border-[#e6eaf2] bg-white px-[13px] pb-[9px] pt-[9px] text-[14px] leading-[20px] text-[#334155]">
                        Also — how much is a single session? A friend recommended you guys, said her skin's never looked better!
                        <div class="mt-[5px] flex items-center text-[12px] leading-[18px] text-[#8a94a6]"><svg class="mr-[4px] h-[10px] w-[10px]"><use href="#i-sms"/></svg>SMS<span class="ml-[4px]">Today • 11:04 AM</span></div>
                    </div>
                </div>

                <!-- Composer -->
                <div class="mb-[18px] ml-[-4px] mr-[-4px] mt-auto flex h-[144px] flex-col rounded-[14px] border border-[#e6eaf2] bg-white shadow-[0_1px_4px_rgba(15,28,51,0.08)]">
                    <div class="flex h-[37px] shrink-0 items-center border-b border-dashed border-[#e2e7f0] pl-[12px] pt-[2px]">
                        <span class="flex h-[23px] items-center rounded-full bg-[#ebf7fc] pl-[9px] pr-[8px] font-['Inter'] text-[12px] font-semibold text-[#2389b3]"><svg class="mr-[6px] h-[12px] w-[12px] text-[#5fb4d0]"><use href="#i-msg"/></svg>SMS<svg class="ml-[6px] h-[9px] w-[9px] text-[#a3adbb]"><use href="#i-down"/></svg></span>
                        <span class="ml-[125px] font-['Inter'] text-[12px] font-semibold text-[#c2570c]">(no reply)</span>
                        <span class="ml-[12px] rounded-full border border-[#d5dbe5] px-[8px] font-['Inter'] text-[11px] font-semibold leading-[17px] text-[#0a7acb]">Buy a number</span>
                    </div>
                    <div class="flex gap-[8px] pl-[14px] pt-[12px] text-[13.5px] leading-[20px] text-[#8a94a6]"><span>Type a message…</span><span>/</span><span>for templates</span><span>•</span><span>$balance</span><span>•</span><span>:smile</span></div>
                    <div class="mt-auto flex items-center pb-[8px] pl-[17px] pr-[8px]">
                        <svg class="h-[15px] w-[15px] text-[#5a6678]"><use href="#i-grid"/></svg>
                        <svg class="ml-[21px] h-[15px] w-[15px] text-[#5a6678]"><use href="#i-smile"/></svg>
                        <svg class="ml-[21px] h-[15px] w-[15px] text-[#0a7acb]"><use href="#i-spark"/></svg>
                        <svg class="ml-[21px] h-[14px] w-[14px] text-[#5a6678]"><use href="#i-dots"/></svg>
                        <span class="ml-auto text-[12.5px] text-[#8a94a6]">0 • 1/10 <span class="text-[11.5px]">segments</span></span>
                        <span class="ml-[10px] flex h-[32px] w-[84px] items-center justify-center gap-[8px] rounded-full bg-[#d5dbe5] font-['Inter'] text-[13.5px] font-semibold text-[#64748b]">Send<svg class="h-[14px] w-[14px]"><use href="#i-send"/></svg></span>
                    </div>
                </div>
            </div>
        </main>

        <!-- Patient panel -->
        <aside class="flex flex-1 flex-col bg-white">
            <div class="flex h-[167px] shrink-0 flex-col items-center border-b border-[#e6eaf2] bg-gradient-to-b from-[#eef5fe] to-white pt-[19px]">
                <div class="flex h-[70px] w-[70px] items-center justify-center rounded-full border-[4px] border-white bg-[#e6dcf8] font-['Inter'] text-[24px] font-semibold text-[#6b4fc0]">GC</div>
                <div class="mt-[5px] font-['Inter'] text-[17px] font-bold leading-[24px]">Grace Chen</div>
                <div class="mt-[9px] font-['Liberation_Mono',monospace] text-[12px] leading-[14px] tracking-[-0.02em] text-[#7b8698]">PT-30405</div>
            </div>
            <div class="flex h-[73px] shrink-0 items-start gap-[8px] border-b border-[#e6eaf2] px-[16px] pt-[12px]">
                <div class="flex h-[53px] flex-1 flex-col items-center justify-center gap-[3px] rounded-[12px] border border-[#e2e7f0] font-['Inter'] text-[12px] font-semibold leading-[16px]"><svg class="h-[16px] w-[16px] text-[#2b8fd8]"><use href="#i-cal"/></svg>Book</div>
                <div class="flex h-[53px] flex-1 flex-col items-center justify-center gap-[3px] rounded-[12px] border border-[#e2e7f0] font-['Inter'] text-[12px] font-semibold leading-[16px]"><svg class="h-[16px] w-[16px] text-[#2b8fd8]"><use href="#i-file"/></svg>Chart</div>
                <div class="flex h-[53px] flex-1 flex-col items-center justify-center gap-[3px] rounded-[12px] border border-[#e2e7f0] font-['Inter'] text-[12px] font-semibold leading-[16px]"><svg class="h-[16px] w-[16px] text-[#2b8fd8]"><use href="#i-card"/></svg>Bill</div>
                <div class="flex h-[53px] flex-1 flex-col items-center justify-center gap-[3px] rounded-[12px] border border-[#e2e7f0] font-['Inter'] text-[12px] font-semibold leading-[16px]"><svg class="h-[16px] w-[16px] text-[#2b8fd8]"><use href="#i-user"/></svg>Profile</div>
            </div>

            <div class="h-[165px] shrink-0 border-b border-[#e6eaf2] px-[18px] pt-[12px]">
                <div class="font-['Inter'] text-[11px] font-bold leading-[18px] tracking-[0.09em] text-[#6f7a8c]">CONTACT</div>
                <div class="mt-[9px] flex h-[28px] items-center text-[13px]"><span class="w-[89px] text-[#7b8698]">Phone</span><span class="font-['Liberation_Mono',monospace] text-[12px] font-bold">+1 (206) 555-0187</span><svg class="ml-[8px] h-[11px] w-[11px] text-[#a3adbb]"><use href="#i-clip"/></svg></div>
                <div class="flex h-[28px] items-center text-[13px]"><span class="w-[89px] text-[#7b8698]">Email</span><span class="text-[13.2px]">grace.chen@example.com</span><svg class="ml-[8px] h-[11px] w-[11px] text-[#a3adbb]"><use href="#i-mail"/></svg></div>
                <div class="flex h-[28px] items-center text-[13px]"><span class="w-[89px] text-[#7b8698]">DOB</span><span class="text-[14px]">1998-09-30</span></div>
                <div class="flex h-[28px] items-center text-[13px]"><span class="w-[89px] text-[#7b8698]">Address</span><span>2210 Cedar Lane, Seattle, WA</span></div>
            </div>

            <div class="h-[118px] shrink-0 border-b border-[#e6eaf2] px-[18px] pt-[12px]">
                <div class="flex items-center justify-between font-['Inter'] text-[11px] font-bold leading-[18px]"><span class="tracking-[0.09em] text-[#6f7a8c]">FILES</span><span class="flex items-center gap-[3px] font-semibold text-[#0b5c9e]">View all<svg class="h-[9px] w-[9px]"><use href="#i-right"/></svg></span></div>
                <div class="mt-[8px] flex h-[65px] w-[65px] flex-col items-center justify-center gap-[2px] rounded-[12px] border border-[#e2e7f0] bg-[#eef5fd] text-[#2b6ea5]"><svg class="h-[17px] w-[17px]"><use href="#i-file"/></svg><span class="font-['Inter'] text-[9px] font-bold tracking-[0.04em]">PDF</span></div>
            </div>

            <div class="h-[134px] shrink-0 border-b border-[#e6eaf2] px-[18px] pt-[12px]">
                <div class="flex items-center justify-between font-['Inter'] text-[11px] font-bold leading-[18px]"><span class="tracking-[0.09em] text-[#6f7a8c]">NOTES</span><span class="flex items-center gap-[3px] font-semibold text-[#0b5c9e]">View all<svg class="h-[9px] w-[9px]"><use href="#i-right"/></svg></span></div>
                <div class="mt-[8px] h-[81px] rounded-[12px] border border-[#e2e7f0] bg-[#f4f6fb] px-[12px] pt-[10px] text-[12.7px] leading-[19px] text-[#475569]">
                    Sample client — created by the demo data toggle.
                    <div class="mt-[5px] flex items-center"><span class="font-['Inter'] text-[11px] font-semibold text-[#334155]">Sarah Mitchell</span><span class="mx-[5px] text-[10px] text-[#8a94a6]">•</span><span class="text-[11.8px] text-[#8a94a6]">13 Aug 2026</span></div>
                </div>
            </div>

            <div class="h-[81px] shrink-0 border-b border-[#e6eaf2] px-[18px] pt-[12px]">
                <div class="flex items-center justify-between font-['Inter'] text-[11px] font-bold leading-[18px]"><span class="tracking-[0.09em] text-[#6f7a8c]">ACCOUNT</span><span class="flex items-center gap-[3px] font-semibold text-[#0b5c9e]">Statement<svg class="h-[9px] w-[9px]"><use href="#i-right"/></svg></span></div>
                <div class="mt-[9px] flex h-[28px] items-center text-[13px]"><span class="w-[89px] text-[#7b8698]">Balance</span><span class="font-['Liberation_Mono',monospace] text-[12px] font-bold text-[#15803d]">£0.00</span></div>
            </div>

            <div class="px-[18px] pt-[12px]">
                <div class="flex items-center justify-between font-['Inter'] text-[11px] font-bold leading-[18px]"><span class="tracking-[0.09em] text-[#6f7a8c]">PRIVACY</span><span class="flex items-center gap-[4px] font-semibold text-[#15803d]"><svg class="h-[11px] w-[11px] text-[#5e9e7c]"><use href="#i-shield"/></svg>HIPAA-secured</span></div>
                <p class="mt-[8px] text-[12px] leading-[19px] text-[#8a94a6]">Messages are encrypted in transit and at rest. Audit log is available on the patient chart.</p>
            </div>
        </aside>
    </div>
</body>
</html>
